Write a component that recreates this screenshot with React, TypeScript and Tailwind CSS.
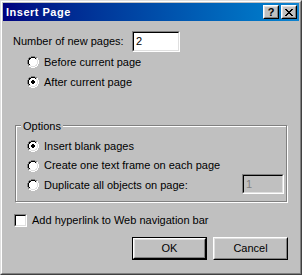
import type { ReactElement } from 'react';

function Radio({ checked }: { checked?: boolean }) {
  const px: ReactElement[] = [];
  for (let y = 0; y < 12; y++) {
    for (let x = 0; x < 12; x++) {
      const dx = x - 5.5;
      const dy = y - 5.5;
      const d = Math.sqrt(dx * dx + dy * dy);
      const tl = dx + dy < 0;
      let c = '';
      if (d >= 5 && d < 5.9) c = tl ? '#808080' : '#ffffff';
      else if (d >= 4 && d < 5) c = tl ? '#000000' : '#dfdfdf';
      else if (d < 4) c = '#ffffff';
      if (checked && x >= 4 && x <= 7 && y >= 4 && y <= 7) {
        const corner = (x === 4 || x === 7) && (y === 4 || y === 7);
        if (!corner) c = '#000000';
      }
      if (c) px.push(<rect key={`${x}-${y}`} x={x} y={y} width={1} height={1} fill={c} />);
    }
  }
  return (
    <svg width="12" height="12" viewBox="0 0 12 12" shapeRendering="crispEdges" className="shrink-0">
      {px}
    </svg>
  );
}

function RadioRow({ label, checked, h }: { label: string; checked?: boolean; h: string }) {
  return (
    <div className={`flex items-center gap-[5px] ${h}`}>
      <Radio checked={checked} />
      <span>{label}</span>
    </div>
  );
}

function Sunken({ className, children }: { className: string; children?: React.ReactNode }) {
  return (
    <div className={`border border-t-[#808080] border-l-[#808080] border-r-white border-b-white ${className}`}>
      <div className="h-full w-full border border-t-black border-l-black border-r-[#dfdfdf] border-b-[#dfdfdf] flex items-center pl-[2px]">
        {children}
      </div>
    </div>
  );
}

function Button({ label, isDefault }: { label: string; isDefault?: boolean }) {
  return (
    <div className={`w-[75px] h-[23px] ${isDefault ? 'border border-black' : ''}`}>
      <div className="h-full w-full border border-t-white border-l-white border-r-black border-b-black">
        <div className="h-full w-full border border-t-[#dfdfdf] border-l-[#dfdfdf] border-r-[#808080] border-b-[#808080] flex items-center justify-center">
          {label}
        </div>
      </div>
    </div>
  );
}

function TitleButton({ children }: { children: React.ReactNode }) {
  return (
    <div className="w-[16px] h-[14px] bg-[#c0c0c0] border border-t-white border-l-white border-r-black border-b-black">
      <div className="h-full w-full border border-t-[#dfdfdf] border-l-[#dfdfdf] border-r-[#808080] border-b-[#808080] flex items-center justify-center">
        {children}
      </div>
    </div>
  );
}

export default function App() {
  return (
    <div className="w-[302px] h-[275px] bg-[#c0c0c0] border border-t-[#dfdfdf] border-l-[#dfdfdf] border-r-[#404040] border-b-[#404040] font-['Liberation_Sans',Arial,sans-serif] text-[11px] text-black">
      <div className="h-full border border-t-white border-l-white border-r-[#808080] border-b-[#808080] p-px flex flex-col">
        {/* Title bar */}
        <div className="h-[18px] shrink-0 flex items-center justify-between pl-[3px] pr-[2px] bg-gradient-to-r from-[#000080] to-[#1084d0]">
          <span className="font-bold text-white text-[11px] tracking-[0.5px]">Insert Page</span>
          <div className="flex gap-[2px]">
            <TitleButton>
              <span className="font-bold text-[11px] leading-none">?</span>
            </TitleButton>
            <TitleButton>
              <svg width="8" height="7" viewBox="0 0 8 7" shapeRendering="crispEdges">
                <path d="M0 0h2v1h-2zM6 0h2v1h-2zM1 1h2v1h-2zM5 1h2v1h-2zM2 2h4v1h-4zM3 3h2v1h-2zM2 4h4v1h-4zM1 5h2v1h-2zM5 5h2v1h-2zM0 6h2v1h-2zM6 6h2v1h-2z" fill="#000" />
              </svg>
            </TitleButton>
          </div>
        </div>

        {/* Content */}
        <div className="flex flex-col pl-[10px]">
          <div className="flex items-center mt-[10px] h-[21px]">
            <span className="w-[119px]">Number of new pages:</span>
            <Sunken className="w-[48px] h-[21px] bg-white">
              <span>2</span>
            </Sunken>
          </div>
          <div className="pl-[14px]">
            <RadioRow label="Before current page" h="h-[20px]" />
            <RadioRow label="After current page" checked h="h-[20px]" />
          </div>

          {/* Options group */}
          <div className="relative ml-[2px] mt-[33px] w-[272px] h-[77px] border border-[#808080] shadow-[inset_1px_1px_0_#fff,1px_1px_0_#fff] pt-[10px] pl-[11px] pr-[2px]">
            <span className="absolute -top-[8px] left-[5px] px-[2px] bg-[#c0c0c0]">Options</span>
            <RadioRow label="Insert blank pages" checked h="h-[20px]" />
            <RadioRow label="Create one text frame on each page" h="h-[19px]" />
            <div className="flex items-center justify-between h-[20px]">
              <div className="flex items-center gap-[5px]">
                <Radio />
                <span>Duplicate all objects on page:</span>
              </div>
              <Sunken className="w-[42px] h-[20px] -mt-[2px] bg-[#c0c0c0]">
                <span className="text-[#808080]">1</span>
              </Sunken>
            </div>
          </div>

          {/* Checkbox */}
          <div className="flex items-center gap-[5px] mt-[8px] h-[20px] ml-[1px]">
            <Sunken className="w-[13px] h-[13px] bg-white" />
            <span>Add hyperlink to Web navigation bar</span>
          </div>

          {/* Buttons */}
          <div className="flex justify-end gap-[6px] mt-[7px] pr-[11px]">
            <Button label="OK" isDefault />
            <Button label="Cancel" />
          </div>
        </div>
      </div>
    </div>
  );
}
